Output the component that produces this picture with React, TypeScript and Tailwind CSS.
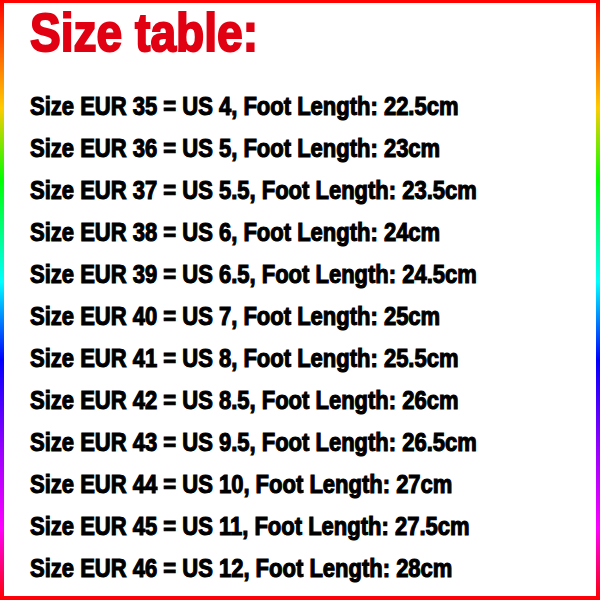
const rows = [
  ["35", "4", "22.5"],
  ["36", "5", "23"],
  ["37", "5.5", "23.5"],
  ["38", "6", "24"],
  ["39", "6.5", "24.5"],
  ["40", "7", "25"],
  ["41", "8", "25.5"],
  ["42", "8.5", "26"],
  ["43", "9.5", "26.5"],
  ["44", "10", "27"],
  ["45", "11", "27.5"],
  ["46", "12", "28"],
]

const App = () => {
  return (
    <div className="w-[600px] h-[600px] px-[4px] pt-[3px] pb-[4px] bg-[linear-gradient(to_bottom,#ff0000_0%,#ffcc00_18%,#00ff00_30%,#00ffff_47%,#0000ff_60%,#9900ff_75%,#ff00ff_88%,#ff0000_100%)]">
      <div className="w-full h-full bg-white pl-[26px] font-['Liberation_Sans',Arial,sans-serif] font-bold">
        <h1 className="w-max origin-left scale-x-[0.87] text-[53px] leading-[52px] pt-[4px] text-[#e00012] [-webkit-text-stroke:2px_#e00012]">Size table:</h1>
        <div className="mt-[26px]">
          {rows.map(([eur, us, cm]) => (
            <div key={eur} className="w-max origin-left scale-x-[0.88] text-[25px] leading-[42px] text-black [-webkit-text-stroke:1.1px_black]">
              Size EUR {eur} = US {us}, Foot Length: {cm}cm
            </div>
          ))}
        </div>
      </div>
    </div>
  )
}

export default App
